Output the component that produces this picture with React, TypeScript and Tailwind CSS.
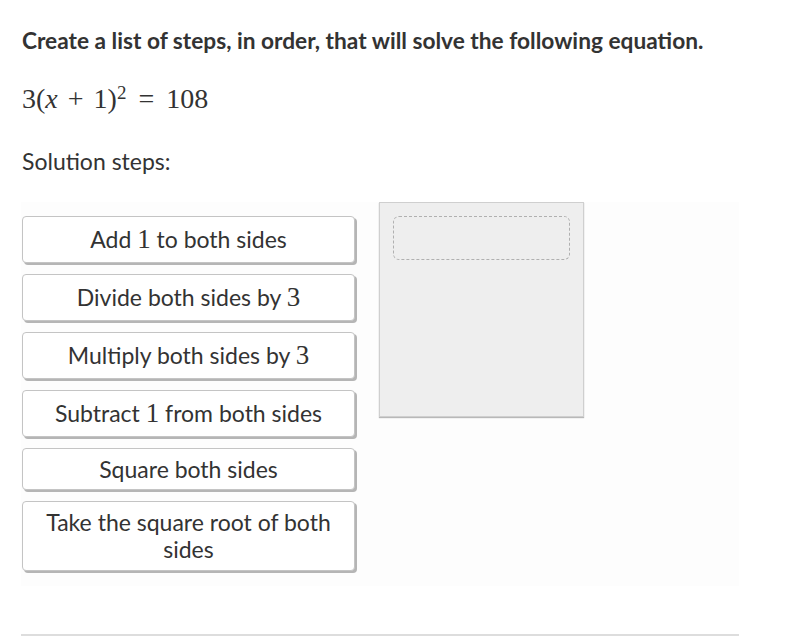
import React from "react";

const M = ({ children }: { children: React.ReactNode }) => (
  <span className="font-['Liberation_Serif',serif] text-[27px] leading-none">{children}</span>
);

const Card = ({ children, h }: { children: React.ReactNode; h: string }) => (
  <div
    className={`w-[333px] ${h} flex items-center justify-center text-center rounded-[4px] border border-[#c4c4c4] bg-white shadow-[2px_2px_0_#b5b5b5] px-4 text-[23px] leading-[27px] text-[#333]`}
  >
    <div>{children}</div>
  </div>
);

export default function App() {
  return (
    <div className="w-[800px] h-[638px] bg-white font-['Lato',sans-serif] text-[#333] overflow-hidden">
      <div className="ml-[21px] w-[718px] pt-[25px]">
        <h1 className="text-[22.7px] font-bold leading-[32px] ml-[1px] whitespace-nowrap">
          Create a list of steps, in order, that will solve the following equation.
        </h1>
        <div className="mt-[25px] ml-[1px] font-['Liberation_Serif',serif] text-[28px] leading-[34px] whitespace-nowrap">
          3(<i>x</i>
          <span className="mx-[10px]">+</span>1)<sup className="text-[19px]">2</sup>
          <span className="mx-[12px]">=</span>108
        </div>
        <div className="mt-[29px] ml-[1px] text-[23px] leading-[32px]">Solution steps:</div>
        <div className="mt-[25px] bg-[#fdfdfd] h-[384px] flex gap-[24px] pl-[1px]">
          <div className="flex flex-col gap-[11px] pt-[14px]">
            <Card h="h-[47px]">
              Add <M>1</M> to both sides
            </Card>
            <Card h="h-[47px]">
              Divide both sides by <M>3</M>
            </Card>
            <Card h="h-[47px]">
              Multiply both sides by <M>3</M>
            </Card>
            <Card h="h-[47px]">
              Subtract <M>1</M> from both sides
            </Card>
            <Card h="h-[42px]">Square both sides</Card>
            <Card h="h-[70px]">Take the square root of both sides</Card>
          </div>
          <div className="w-[205px] h-[215px] bg-[#eeeeee] border border-[#cfcfcf] shadow-[0_1px_1px_#b8b8b8] pt-[13px] pl-[13px]">
            <div className="w-[177px] h-[44px] rounded-[6px] border border-dashed border-[#b0b0b0]" />
          </div>
        </div>
        <div className="mt-[48px] h-[2px] bg-[#dddddd]" />
      </div>
    </div>
  );
}
